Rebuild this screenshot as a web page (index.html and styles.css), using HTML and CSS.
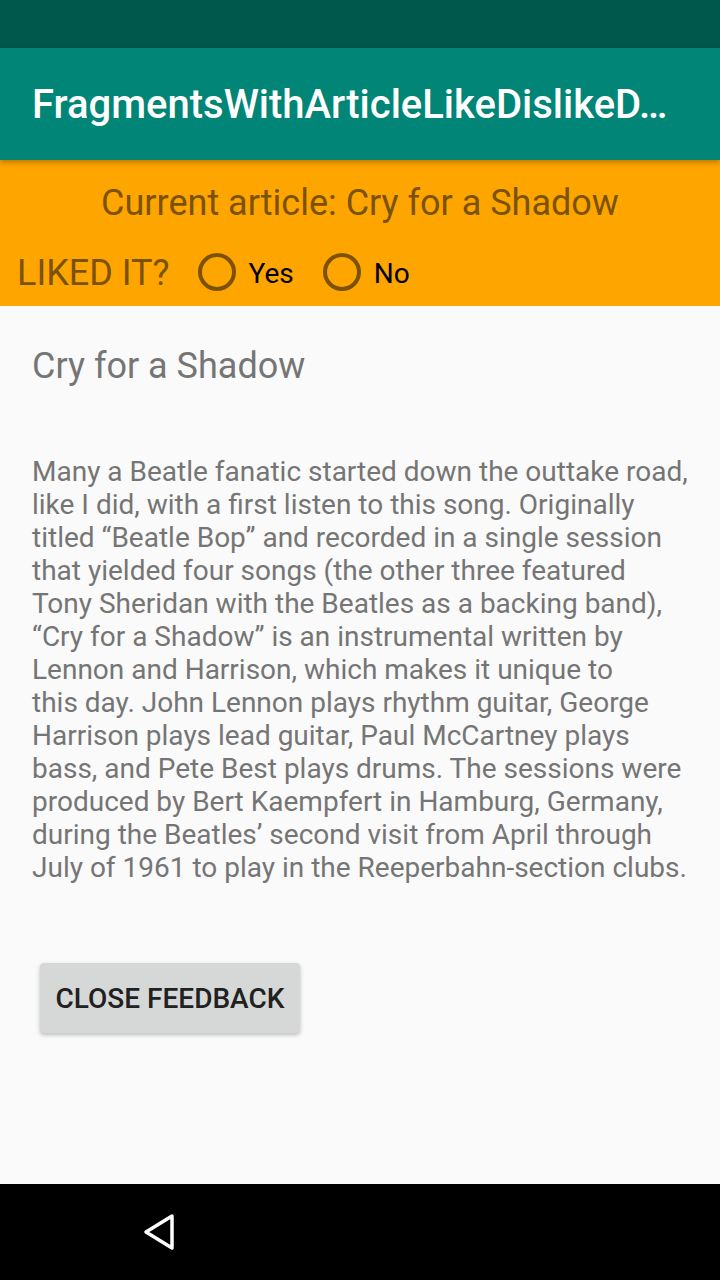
FILE: index.html
```html
<!DOCTYPE html>
<html>
<head>
<meta charset="utf-8">
<link rel="stylesheet" href="styles.css">
</head>
<body>
<div class="screen">
  <div class="status-bar"></div>
  <header class="app-bar">
    <h1 class="app-title">FragmentsWithArticleLikeDislikeD…</h1>
  </header>
  <section class="feedback">
    <div class="current">Current article: Cry for a Shadow</div>
    <div class="liked-row">
      <span class="liked-label">LIKED IT?</span>
      <label class="radio">
        <svg class="radio-icon" width="40" height="40" viewBox="0 0 40 40"><circle cx="20" cy="20" r="17" fill="none" stroke="#7a5200" stroke-width="4"/></svg>
        <span class="radio-text">Yes</span>
      </label>
      <label class="radio">
        <svg class="radio-icon" width="40" height="40" viewBox="0 0 40 40"><circle cx="20" cy="20" r="17" fill="none" stroke="#7a5200" stroke-width="4"/></svg>
        <span class="radio-text">No</span>
      </label>
    </div>
  </section>
  <main class="content">
    <h2 class="article-title">Cry for a Shadow</h2>
    <p class="article-body">Many a Beatle fanatic started down the outtake road,<br>like I did, with a first listen to this song. Originally<br>titled “Beatle Bop” and recorded in a single session<br>that yielded four songs (the other three featured<br>Tony Sheridan with the Beatles as a backing band),<br>“Cry for a Shadow” is an instrumental written by<br>Lennon and Harrison, which makes it unique to<br>this day. John Lennon plays rhythm guitar, George<br>Harrison plays lead guitar, Paul McCartney plays<br>bass, and Pete Best plays drums. The sessions were<br>produced by Bert Kaempfert in Hamburg, Germany,<br>during the Beatles’ second visit from April through<br>July of 1961 to play in the Reeperbahn-section clubs.</p>
    <button class="close-btn">CLOSE FEEDBACK</button>
  </main>
  <nav class="nav-bar">
    <svg class="nav-back" width="40" height="40" viewBox="0 0 40 40"><path d="M32 4 L6 20 L32 36 Z" fill="none" stroke="#ffffff" stroke-width="3.5" stroke-linejoin="round"/></svg>
  </nav>
</div>
</body>
</html>
```

FILE: styles.css
```css
* { box-sizing: border-box; }
html, body {
  margin: 0;
  padding: 0;
  background: #fafafa;
}
body {
  font-family: Roboto, "Noto Sans", sans-serif;
}
.screen {
  width: 720px;
  height: 1280px;
  display: flex;
  flex-direction: column;
  overflow: hidden;
  background: #fafafa;
}
.status-bar {
  height: 48px;
  background: #00574b;
  flex: none;
}
.app-bar {
  height: 112px;
  background: #008577;
  display: flex;
  align-items: center;
  padding: 0 32px;
  flex: none;
  position: relative;
  z-index: 2;
  box-shadow: 0 2px 6px rgba(0,0,0,0.3);
}
.app-title {
  margin: 0;
  color: #ffffff;
  font-size: 40px;
  font-weight: 500;
  white-space: nowrap;
  letter-spacing: 0;
  margin-top: 1px;
}
.feedback {
  background: #ffa500;
  height: 146px;
  flex: none;
  padding-top: 22px;
  display: flex;
  flex-direction: column;
}
.current {
  text-align: center;
  color: #7a5200;
  font-size: 36px;
  line-height: 42px;
}
.liked-row {
  display: flex;
  align-items: center;
  height: 48px;
  margin-top: 25px;
  padding-left: 17px;
}
.liked-label {
  color: #7a5200;
  font-size: 36px;
  line-height: 42px;
  margin-right: 27px;
}
.radio {
  display: flex;
  align-items: center;
  margin-right: 28px;
}
.radio-icon {
  display: block;
  margin-top: -2px;
}
.radio-text {
  font-size: 28px;
  color: #000000;
  margin-left: 12px;
}
.content {
  flex: 1;
  padding: 0 32px;
  background: #fafafa;
}
.article-title {
  margin: 0;
  margin-top: 39px;
  font-size: 36px;
  font-weight: 400;
  color: #757575;
  line-height: 42px;
}
.article-body {
  margin: 0;
  margin-top: 68px;
  font-size: 28px;
  line-height: 33px;
  color: #757575;
  white-space: nowrap;
}
.close-btn {
  display: block;
  margin: 79px 0 0 8px;
  width: 260px;
  height: 70px;
  border: none;
  border-radius: 4px;
  background: #d6d7d7;
  color: #212121;
  font-family: Roboto, sans-serif;
  font-size: 28px;
  font-weight: 500;
  padding: 0;
  box-shadow: 0 2px 4px rgba(0,0,0,0.25);
}
.nav-bar {
  height: 96px;
  background: #000000;
  flex: none;
  display: flex;
  align-items: center;
  padding-left: 140px;
}
.nav-back {
  display: block;
}
```
